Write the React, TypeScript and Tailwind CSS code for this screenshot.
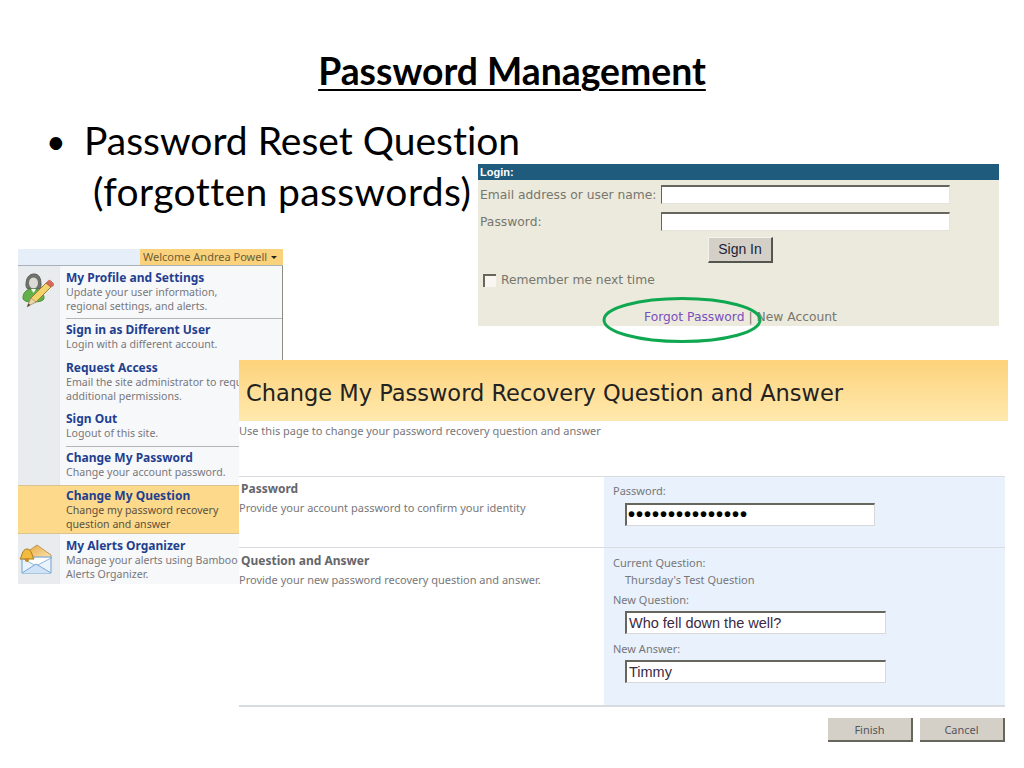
const tahoma = "font-['Noto_Sans','Liberation_Sans',sans-serif]";
const verdana = "font-['DejaVu_Sans','Liberation_Sans',sans-serif]";

function ProfileIcon() {
  return (
    <svg width="32" height="36" viewBox="0 0 32 36">
      <path d="M4 12c0-7 3-11 8-11s7 4 7 11c0 2-1 4-2 4H6c-1 0-2-2-2-4z" fill="#6f736c" stroke="#565a54" />
      <ellipse cx="11.5" cy="10" rx="4.5" ry="5.5" fill="#d9dbd4" />
      <path d="M1 25c0-6 4-9 10-9s11 3 11 9c0 3-5 4-11 4S1 28 1 25z" fill="#63b04a" stroke="#4a8f36" />
      <path d="M9 16l2.500 4 2.500-4z" fill="#f4f6f0" />
      <path d="M6 32l3-7L24 10l5 4-15 15z" fill="#f3d36c" stroke="#9c8038" />
      <path d="M24 10l2-2c1-1 2-1 3 0l2 2c1 1 1 2 0 3l-2 1z" fill="#d8685a" stroke="#a8483c" strokeWidth="0.5" />
      <path d="M5 34l4-9 5 4z" fill="#e9d5ac" stroke="#8b7a55" strokeWidth="0.5" />
      <path d="M5 34l1.500-3.500 2 1.500z" fill="#4a4336" />
    </svg>
  );
}

function AlertsIcon() {
  return (
    <svg width="34" height="32" viewBox="0 0 34 32">
      <defs>
        <linearGradient id="flap" x1="0" y1="0" x2="1" y2="1">
          <stop offset="0" stopColor="#e8a83c" />
          <stop offset="1" stopColor="#fbe6b8" />
        </linearGradient>
      </defs>
      <path d="M8 9L18 2l14 10v4H8z" fill="url(#flap)" stroke="#b99a5a" />
      <path d="M3 14h29v16H3z" fill="#eaf3fc" stroke="#6f9fd0" />
      <path d="M3 15l14 8 15-8" fill="#fff" stroke="#8fb5dc" />
      <path d="M3 30l14-9 15 9" fill="#cfe2f6" stroke="#7ba7d6" />
      <path d="M1 16c2-2 2-10 7-10s5 8 7 10z" fill="#f2bb3e" stroke="#a9781c" />
      <circle cx="8" cy="17" r="2" fill="#c88a22" />
    </svg>
  );
}

function MenuItem({ title, lines, top, active }: { title: string; lines: string[]; top: string; active?: boolean }) {
  return (
    <div className={`pl-[48px] pr-2 ${top}`}>
      <div className={`${tahoma} text-[12px] leading-[14px] font-bold text-[#1f3f8f]`}>{title}</div>
      {lines.map((line) => (
        <div key={line} className={`${tahoma} text-[10.6px] leading-[14px] whitespace-nowrap ${active ? "text-[#5a5140]" : "text-[#77777a]"}`}>
          {line}
        </div>
      ))}
    </div>
  );
}

function UserMenu() {
  return (
    <div className="absolute left-[18px] top-[249px] w-[265px]">
      <div className="flex justify-end h-[17px] bg-[#e6eff9] border-b border-[#a9b0b8]">
        <div className={`${tahoma} w-[143px] bg-[#fbd27c] text-[#6b5d3a] text-[11px] leading-[16px] pl-[3px] flex items-center gap-1`}>
          Welcome Andrea Powell
          <span className="w-0 h-0 border-x-[3px] border-x-transparent border-t-[3px] border-t-[#222]" />
        </div>
      </div>
      <div className="relative bg-[linear-gradient(to_right,#e9ecef_0,#e9ecef_41px,#d5d8dc_41px,#f7f8fa_42px)] border-r border-[#8c8c84] h-[318px]">
        <div className="absolute left-[4px] top-[7px]"><ProfileIcon /></div>
        <div className="absolute left-[1px] top-[277px]"><AlertsIcon /></div>
        <MenuItem top="pt-[5px] pb-[5px]" title="My Profile and Settings" lines={["Update your user information,", "regional settings, and alerts."]} />
        <div className="ml-[48px] h-px bg-[#b5b5b5]" />
        <MenuItem top="pt-[4px]" title="Sign in as Different User" lines={["Login with a different account."]} />
        <MenuItem top="pt-[10px]" title="Request Access" lines={["Email the site administrator to request", "additional permissions."]} />
        <MenuItem top="pt-[9px] pb-[6px]" title="Sign Out" lines={["Logout of this site."]} />
        <div className="ml-[48px] h-px bg-[#b5b5b5]" />
        <MenuItem top="pt-[4px] pb-[6px]" title="Change My Password" lines={["Change your account password."]} />
        <div className="bg-[#fdd98c] border-y border-[#d9c48f] h-[49px]">
          <MenuItem top="pt-[3px]" active title="Change My Question" lines={["Change my password recovery", "question and answer"]} />
        </div>
        <MenuItem top="pt-[5px]" title="My Alerts Organizer" lines={["Manage your alerts using Bamboo", "Alerts Organizer."]} />
      </div>
    </div>
  );
}

function LoginBox() {
  const label = `${verdana} text-[12.3px] leading-[15px] text-[#77776e]`;
  const field = "h-[19px] w-[289px] bg-white border-t-2 border-l border-[#66665c] border-r border-r-[#e4e4dc] border-b border-b-[#e4e4dc]";
  return (
    <div className="absolute left-[478px] top-[164px] w-[521px] h-[162px]">
      <div className="h-[16px] bg-[#1f5b7c] text-white text-[11px] leading-[16px] font-bold px-[2px] font-['Liberation_Sans',sans-serif]">Login:</div>
      <div className="bg-[#eceadc] h-[146px]">
        <div className="flex items-center pt-[5px] pl-[2px]">
          <span className={`${label} w-[181px] mt-[1px] whitespace-nowrap`}>Email address or user name:</span>
          <div className={field} />
        </div>
        <div className="flex items-center pt-[8px] pl-[2px]">
          <span className={`${label} w-[181px] mt-[1px]`}>Password:</span>
          <div className={field} />
        </div>
        <div className="flex justify-end pr-[226px] pt-[6px]">
          <div className="w-[65px] h-[26px] bg-[#d4d0c8] border-t border-l border-[#f4f2ec] border-r-2 border-b-2 border-r-[#55554f] border-b-[#55554f] text-center text-[14px] leading-[23px] text-[#222233] font-['Liberation_Sans',sans-serif]">
            Sign In
          </div>
        </div>
        <div className="flex items-center gap-[5px] pl-[5px] pt-[10px]">
          <div className="w-[13px] h-[13px] bg-[#f7f6f0] border-t-2 border-l-2 border-[#66665c]" />
          <span className={`${label} text-[#7d7d74]`}>Remember me next time</span>
        </div>
        <div className={`${label} pl-[166px] pt-[22px] text-[#6b6b8c] whitespace-nowrap`}>
          <span className="text-[#7a4fc0]">Forgot Password</span> | New Account
        </div>
      </div>
    </div>
  );
}

function TextField({ value }: { value: string }) {
  return (
    <div className="w-[261px] h-[23px] ml-[12px] bg-white border-t-2 border-l-2 border-[#66665c] border-r border-b border-r-[#d8d8d8] border-b-[#d8d8d8] pl-[2px] text-[14.5px] leading-[21px] text-[#3a2a44] font-['Liberation_Sans',sans-serif]">
      {value}
    </div>
  );
}

function RecoveryPanel() {
  const label = `${tahoma} text-[11px] leading-[14px] text-[#77777a]`;
  return (
    <div className="absolute left-[239px] top-[360px] w-[769px] h-[385px] bg-white">
      <div className="h-[61px] bg-gradient-to-b from-[#fdd27a] to-[#ffe9ae] flex items-center pl-[7px] pt-[6px]">
        <span className={`${verdana} text-[22.5px] text-[#222] whitespace-nowrap`}>Change My Password Recovery Question and Answer</span>
      </div>
      <div className={`${label} h-[55px] pt-[3px]`}>Use this page to change your password recovery question and answer</div>

      <div className="w-[766px] flex h-[71px] border-t border-[#d8dbe0]">
        <div className="w-[365px] pt-[5px] pl-[2px]">
          <div className={`${tahoma} text-[12px] leading-[14px] font-bold text-[#66666a]`}>Password</div>
          <div className={`${label} pt-[5px] -ml-[2px]`}>Provide your account password to confirm your identity</div>
        </div>
        <div className="flex-1 bg-[#e8f1fc] pt-[7px] pl-[9px]">
          <div className={`${label} pb-[5px]`}>Password:</div>
          <div className="w-[250px] h-[23px] ml-[12px] bg-white border-t-2 border-l-2 border-[#66665c] border-r border-b border-r-[#d8d8d8] border-b-[#d8d8d8] pl-[1px] text-[20px] leading-[19px] tracking-[1px] font-bold text-black font-['Liberation_Sans',sans-serif] overflow-hidden">
            •••••••••••••••
          </div>
        </div>
      </div>

      <div className="w-[766px] flex h-[160px] border-t border-b-2 border-[#d8dbe0]">
        <div className="w-[365px] pt-[6px] pl-[2px]">
          <div className={`${tahoma} text-[12px] leading-[14px] font-bold text-[#66666a]`}>Question and Answer</div>
          <div className={`${label} pt-[5px] -ml-[2px]`}>Provide your new password recovery question and answer.</div>
        </div>
        <div className="flex-1 bg-[#e8f1fc] pt-[8px] pl-[9px]">
          <div className={label}>Current Question:</div>
          <div className={`${label} pl-[12px] pt-[3px]`}>Thursday's Test Question</div>
          <div className={`${label} pt-[6px] pb-[4px]`}>New Question:</div>
          <TextField value="Who fell down the well?" />
          <div className={`${label} pt-[8px] pb-[4px]`}>New Answer:</div>
          <TextField value="Timmy" />
        </div>
      </div>

      <div className="w-[766px] flex justify-end gap-[7px] pt-[11px]">
        {["Finish", "Cancel"].map((name) => (
          <div key={name} className={`${tahoma} w-[85px] h-[24px] bg-[#d4d0c8] border-r-2 border-b-2 border-[#66665c] text-center text-[11px] leading-[23px] text-[#55555a]`}>
            {name}
          </div>
        ))}
      </div>
    </div>
  );
}

export default function App() {
  return (
    <div className="relative w-[1024px] h-[768px] bg-white overflow-hidden font-['Lato',sans-serif] text-black [font-variant-ligatures:none]">
      <h1 className="pt-[49px] text-center text-[37.3px] leading-[44px] font-bold underline decoration-2 underline-offset-[4px]">Password Management</h1>
      <div className="flex pl-[44px] pt-[22px] text-[39px] leading-[51px]">
        <span className="w-[40px] text-[34px] pl-[2px]">•</span>
        <div>
          <div>Password Reset Question</div>
          <div className="pl-[9px] tracking-[0.4px]">(forgotten passwords)</div>
        </div>
      </div>

      <UserMenu />
      <LoginBox />
      <RecoveryPanel />

      <svg className="absolute left-[602px] top-[296px]" width="162" height="48" viewBox="0 0 162 48">
        <ellipse cx="80" cy="24" rx="78" ry="21.5" fill="none" stroke="#0fa851" strokeWidth="3" />
      </svg>
    </div>
  );
}
